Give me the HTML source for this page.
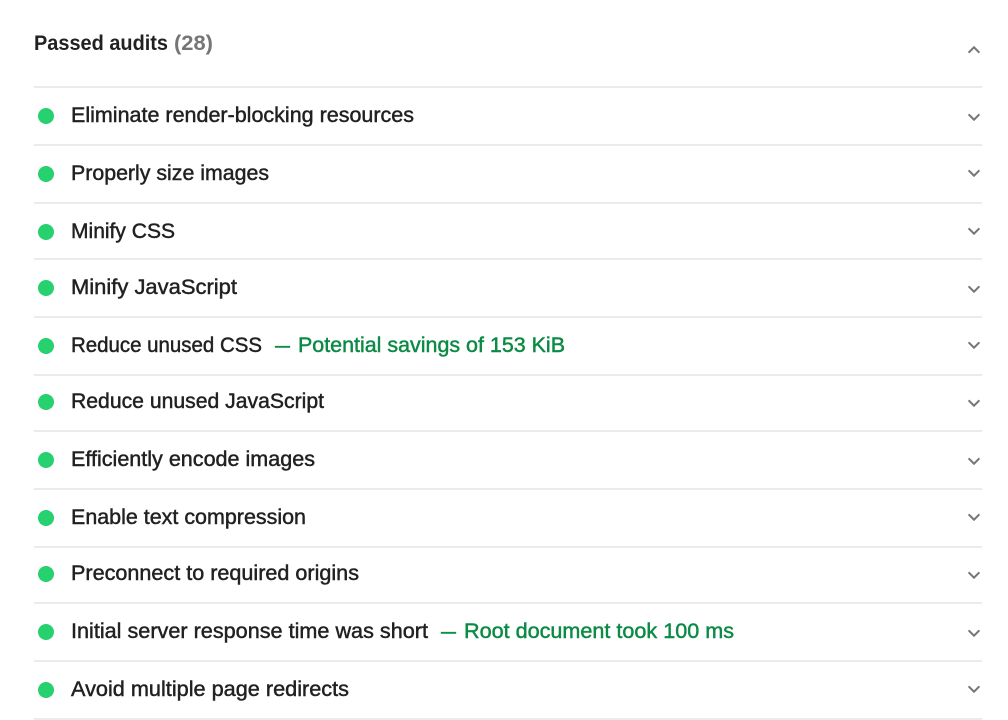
<!DOCTYPE html>
<html>
<head>
<meta charset="utf-8">
<style>
html,body{margin:0;padding:0;background:#fff;}
svg{display:block;}
text{font-family:"Liberation Sans",sans-serif;font-size:21px;}
.t{fill:#212121;stroke:#212121;stroke-width:.45px;}
.g{fill:#0b8a45;stroke:#0b8a45;stroke-width:.45px;}
.h{font-weight:bold;fill:#212121;}
.c{font-weight:bold;fill:#757575;}
.l{fill:#ebebeb;}
.d{fill:#27d170;}
.v{fill:none;stroke:#757575;stroke-width:2px;}
</style>
</head>
<body>
<svg width="1008" height="720" viewBox="0 0 1008 720" xmlns="http://www.w3.org/2000/svg">
<text class="h" x="34" y="50" textLength="134" lengthAdjust="spacingAndGlyphs">Passed audits</text>
<text class="c" x="174" y="50" textLength="39" lengthAdjust="spacingAndGlyphs">(28)</text>
<path class="v" d="M968.6 52.7L974 47.3L979.4 52.7"/>

<rect class="l" x="34" y="86" width="948" height="2"/>
<rect class="l" x="34" y="144" width="948" height="2"/>
<rect class="l" x="34" y="202" width="948" height="2"/>
<rect class="l" x="34" y="258" width="948" height="2"/>
<rect class="l" x="34" y="316" width="948" height="2"/>
<rect class="l" x="34" y="374" width="948" height="2"/>
<rect class="l" x="34" y="430" width="948" height="2"/>
<rect class="l" x="34" y="488" width="948" height="2"/>
<rect class="l" x="34" y="546" width="948" height="2"/>
<rect class="l" x="34" y="602" width="948" height="2"/>
<rect class="l" x="34" y="660" width="948" height="2"/>
<rect class="l" x="34" y="718" width="948" height="2"/>

<circle class="d" cx="46" cy="116" r="8"/>
<circle class="d" cx="46" cy="174" r="8"/>
<circle class="d" cx="46" cy="232" r="8"/>
<circle class="d" cx="46" cy="288" r="8"/>
<circle class="d" cx="46" cy="346" r="8"/>
<circle class="d" cx="46" cy="402" r="8"/>
<circle class="d" cx="46" cy="460" r="8"/>
<circle class="d" cx="46" cy="518" r="8"/>
<circle class="d" cx="46" cy="574" r="8"/>
<circle class="d" cx="46" cy="632" r="8"/>
<circle class="d" cx="46" cy="690" r="8"/>

<text class="t" x="71" y="122" textLength="343" lengthAdjust="spacingAndGlyphs">Eliminate render-blocking resources</text>
<text class="t" x="71" y="180" textLength="198" lengthAdjust="spacingAndGlyphs">Properly size images</text>
<text class="t" x="71" y="238" textLength="104" lengthAdjust="spacingAndGlyphs">Minify CSS</text>
<text class="t" x="71" y="294" textLength="166" lengthAdjust="spacingAndGlyphs">Minify JavaScript</text>
<text class="t" x="71" y="352" textLength="191" lengthAdjust="spacingAndGlyphs">Reduce unused CSS</text>
<text class="g" x="275" y="352" textLength="15" lengthAdjust="spacingAndGlyphs">—</text>
<text class="g" x="298" y="352" textLength="267" lengthAdjust="spacingAndGlyphs">Potential savings of 153 KiB</text>
<text class="t" x="71" y="408" textLength="253" lengthAdjust="spacingAndGlyphs">Reduce unused JavaScript</text>
<text class="t" x="71" y="466" textLength="244" lengthAdjust="spacingAndGlyphs">Efficiently encode images</text>
<text class="t" x="71" y="524" textLength="235" lengthAdjust="spacingAndGlyphs">Enable text compression</text>
<text class="t" x="71" y="580" textLength="288" lengthAdjust="spacingAndGlyphs">Preconnect to required origins</text>
<text class="t" x="71" y="638" textLength="357" lengthAdjust="spacingAndGlyphs">Initial server response time was short</text>
<text class="g" x="441" y="638" textLength="15" lengthAdjust="spacingAndGlyphs">—</text>
<text class="g" x="464" y="638" textLength="270" lengthAdjust="spacingAndGlyphs">Root document took 100 ms</text>
<text class="t" x="71" y="696" textLength="278" lengthAdjust="spacingAndGlyphs">Avoid multiple page redirects</text>

<path class="v" d="M968.6 114.3L974 119.7L979.4 114.3"/>
<path class="v" d="M968.6 170.3L974 175.7L979.4 170.3"/>
<path class="v" d="M968.6 228.3L974 233.7L979.4 228.3"/>
<path class="v" d="M968.6 286.3L974 291.7L979.4 286.3"/>
<path class="v" d="M968.6 342.3L974 347.7L979.4 342.3"/>
<path class="v" d="M968.6 400.3L974 405.7L979.4 400.3"/>
<path class="v" d="M968.6 458.3L974 463.7L979.4 458.3"/>
<path class="v" d="M968.6 514.3L974 519.7L979.4 514.3"/>
<path class="v" d="M968.6 572.3L974 577.7L979.4 572.3"/>
<path class="v" d="M968.6 630.3L974 635.7L979.4 630.3"/>
<path class="v" d="M968.6 686.3L974 691.7L979.4 686.3"/>
</svg>
</body>
</html>
